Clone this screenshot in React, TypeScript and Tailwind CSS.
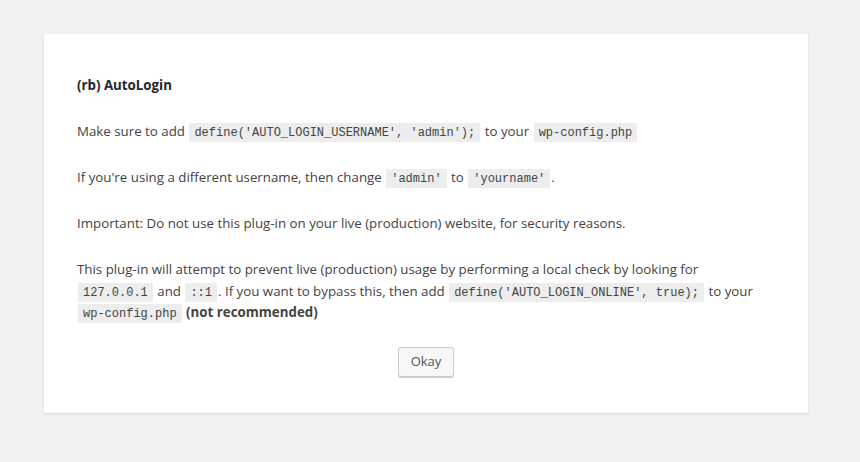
import React from 'react';

const Code: React.FC<{ children: React.ReactNode }> = ({ children }) => (
    <code className="mx-px bg-[#ededed] px-[5px] pt-[3px] pb-[2px] align-baseline font-['Liberation_Mono',monospace] text-[12px] leading-[12px] text-[#444]">
        {children}
    </code>
);

export default function App() {
    return (
        <div className="min-h-[462px] w-full bg-[#f1f1f1] px-[44px] pt-[34px] font-['Open_Sans',sans-serif] text-[13.3px] text-[#444]">
            <div className="w-[764px] bg-white px-[33px] pt-[41px] pb-[36px] shadow-[0_1px_2px_rgba(0,0,0,0.1)]">
                <p className="leading-[21.5px] font-bold text-[#23282d]">(rb) AutoLogin</p>

                <p className="mt-[24.5px] leading-[21.5px]">
                    Make sure to add <Code>define('AUTO_LOGIN_USERNAME', 'admin');</Code> to your <Code>wp-config.php</Code>
                </p>

                <p className="mt-[24.5px] leading-[21.5px]">
                    If you're using a different username, then change <Code>'admin'</Code> to <Code>'yourname'</Code>.
                </p>

                <p className="mt-[24.5px] leading-[21.5px]">
                    Important: Do not use this plug-in on your live (production) website, for security reasons.
                </p>

                <p className="mt-[24.5px] leading-[21.5px]">
                    This plug-in will attempt to prevent live (production) usage by performing a local check by looking for
                    <br />
                    <Code>127.0.0.1</Code> and <Code>::1</Code>. If you want to bypass this, then add{' '}
                    <Code>define('AUTO_LOGIN_ONLINE', true);</Code> to your
                    <br />
                    <Code>wp-config.php</Code> <strong className="font-bold">(not recommended)</strong>
                </p>

                <div className="mt-[23px] flex justify-center">
                    <button className="h-[30px] w-[56px] rounded-[3px] border border-[#ccc] bg-[#f7f7f7] text-[13px] text-[#555] shadow-[0_1px_0_#ccc]">
                        Okay
                    </button>
                </div>
            </div>
        </div>
    );
}
